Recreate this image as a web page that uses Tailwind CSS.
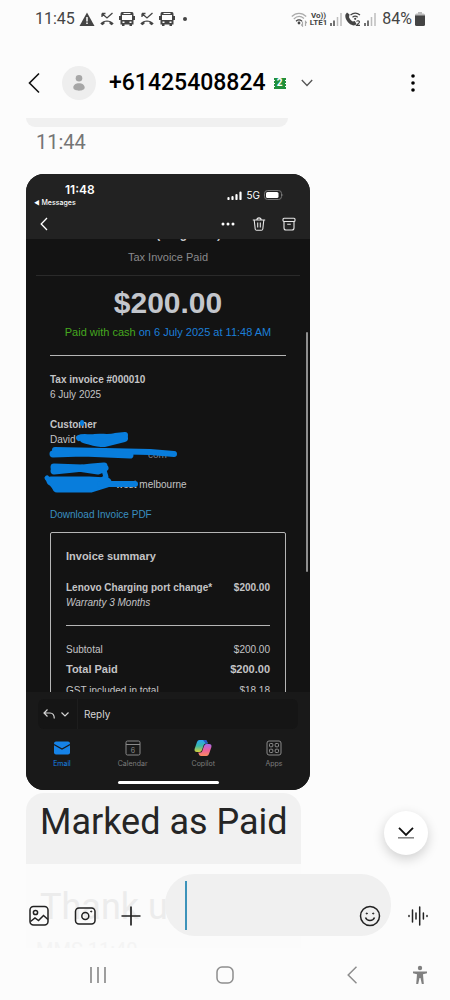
<!DOCTYPE html>
<html lang="en">
<head>
  <meta charset="UTF-8" />
  <meta name="viewport" content="width=device-width, initial-scale=1.0" />
  <title>Messages</title>
  <script src="https://cdn.jsdelivr.net/npm/@tailwindcss/browser@4"></script>
</head>
<body class="bg-[#fcfcfc] font-['Roboto',sans-serif] text-black">
  <svg class="hidden">
    <symbol id="missed" viewBox="0 0 16 16">
      <path d="M3 2.500v3.500M3 2.500h3.500M3.200 2.800l4.800 4.200 5.500-5" fill="none" stroke="#444" stroke-width="1.300" />
      <path d="M1.300 12.600c3.500-4 9.900-4 13.400 0l-2 1.600-2.200-1.500v-1.600c-1.600-.6-3.400-.6-5 0v1.600l-2.200 1.500z" fill="#444" />
    </symbol>
    <symbol id="bus" viewBox="0 0 16 16">
      <path fill-rule="evenodd" fill="#444" d="M3 1h10q1.500 0 1.500 2v2H16v4h-1.500v4.500H13V15h-2.500v-1.500h-5V15H3v-1.500H1.500V9H0V5h1.500V3Q1.500 1 3 1zM3 4v5h10V4zM3.500 10.500v1.500h2v-1.500zM10.500 10.500v1.500h2v-1.500zM4.500 2v1h7V2z" />
    </symbol>
    <symbol id="signal" viewBox="0 0 12 14">
      <path d="M1 14v-3M4 14V8.500" stroke="#444" stroke-width="1.500" />
      <path d="M7.500 14V5M11 14V1" stroke="#bdbdbd" stroke-width="1.500" />
    </symbol>
  </svg>

  <div class="min-h-screen flex flex-col">
    <!-- Status bar -->
    <div class="flex items-center justify-between h-[38px] pl-[35px] pr-[25px] text-base text-[#444]">
      <div class="flex items-center gap-1">
        <span class="w-10">11:45</span>
        <svg class="w-4 h-4" viewBox="0 0 16 16"><path d="M8 1.500 15.500 15H.5z" fill="#444" /><path d="M8 6v4.500M8 11.500V13" stroke="#fff" stroke-width="1.500" /></svg>
        <svg class="w-4 h-4"><use href="#missed" /></svg>
        <svg class="w-4 h-4"><use href="#bus" /></svg>
        <svg class="w-4 h-4"><use href="#missed" /></svg>
        <svg class="w-4 h-4"><use href="#bus" /></svg>
        <span class="w-1 h-1 ml-1 rounded-full bg-[#444]"></span>
      </div>
      <div class="flex items-center gap-[3px]">
        <svg class="w-4 h-4" viewBox="0 0 16 16" fill="none" stroke-width="1.200">
          <path d="M.8 5.500C5 1.200 11 1.200 15.200 5.500M2.800 8C6 4.800 10 4.800 13 7.500" stroke="#aaa" />
          <path d="M5 10.200c2-1.700 4-1.700 6 0" stroke="#444" />
          <circle cx="8" cy="12" r="1.400" fill="#444" />
          <path d="M11.500 10.500v4.500l-1.300-1.500M14.500 15v-4.500l1.300 1.500" stroke="#aaa" />
        </svg>
        <span class="flex flex-col items-center text-[8px] leading-[7px] font-bold"><span>Vo))</span><span>LTE1</span></span>
        <svg class="w-3 h-[14px]"><use href="#signal" /></svg>
        <svg class="w-4 h-4" viewBox="0 0 16 16">
          <path d="M2 1.500 4.500 3.500 4 6.200c.8 2 2 3.300 3.800 4.200l2-.5L11.500 13c-1 1.500-3 1.800-5 .8C2.500 12-.5 7 .5 3.500z" fill="#444" />
          <path d="M5.500 4c3-2.500 6.500-2.500 9.500 0M7.500 6.200c1.700-1.300 3.500-1.300 5.200 0" fill="none" stroke="#444" stroke-width="1.200" />
          <circle cx="10.200" cy="7.800" r="1.100" fill="#444" />
          <path d="M11.500 10.500c1-1.300 3.200-.8 3 .7-.2 1-2 1.800-2.900 3.100H15" fill="none" stroke="#444" stroke-width="1.200" />
        </svg>
        <svg class="w-3 h-[14px]"><use href="#signal" /></svg>
        <span class="ml-[3px]">84%</span>
        <svg class="w-[10px] h-[14px]" viewBox="0 0 10 14"><path d="M3 0h4v1.500h1.500Q10 1.500 10 3v1H0V3q0-1.500 1.500-1.500H3z" fill="#bbb" /><path d="M0 3.500h10v9q0 1.500-1.500 1.500h-7Q0 14 0 12.500z" fill="#444" /></svg>
      </div>
    </div>

    <!-- Conversation header -->
    <header class="flex items-center h-[70px] mt-[10px] pl-7 pr-[29px]">
      <button aria-label="Back"><svg class="w-3 h-[22px]" viewBox="0 0 12 22" fill="none" stroke="#111" stroke-width="1.600"><path d="M11 1.500 1.500 11 11 20.500" /></svg></button>
      <span class="flex items-center justify-center w-[34px] h-[34px] ml-[22px] rounded-full bg-[#eeeeee]">
        <svg class="w-3 h-4" viewBox="0 0 12 16" fill="#a6a6a6"><circle cx="6" cy="3.300" r="3.300" /><path d="M.3 12.500C.3 6.700 11.700 6.700 11.700 12.500c0 4.200-11.400 4.200-11.400 0z" /></svg>
      </span>
      <h1 class="ml-[13px] text-[23px] font-medium">+61425408824</h1>
      <span class="relative flex items-center justify-center w-3 h-[11px] ml-2 text-[10px] leading-none font-bold text-white">
        <svg class="absolute top-0 left-0 w-3 h-[11px]" viewBox="0 0 12 11"><path d="M1 0h10v11H1z" fill="#21903c" /><path d="M.5 0v11M11.500 0v11" stroke="#21903c" stroke-dasharray="2 1" /></svg>
        <span class="relative">2</span>
      </span>
      <button aria-label="Details" class="ml-[15px]"><svg class="w-3 h-[8px]" viewBox="0 0 12 8" fill="none" stroke="#555" stroke-width="1.300"><path d="M.8 1 6 6.500 11.200 1" /></svg></button>
      <button aria-label="More options" class="ml-auto"><svg class="w-4 h-5" viewBox="0 0 16 20"><circle cx="8" cy="3" r="1.800" /><circle cx="8" cy="10" r="1.800" /><circle cx="8" cy="17" r="1.800" /></svg></button>
    </header>

    <!-- Messages -->
    <main class="relative flex-1 pl-[26px]">
      <div class="h-[9px] mr-[162px] rounded-b-[18px] bg-[#f0f0f0]"></div>
      <p class="h-[47px] pl-[10px] pt-[3px] text-[20px] leading-6 text-[#757575]">11:44</p>

      <section class="relative mr-[140px] rounded-[18px] overflow-hidden bg-[#131313] font-['Liberation_Sans',sans-serif] text-[10px] leading-[15px] text-[#c4c4c6]">
        <div class="h-[65px] pt-[9px] bg-[#222222] text-white font-['Inter',sans-serif]">
          <div class="flex justify-between pl-2 pr-[26px]">
            <div>
              <p class="pl-[31px] text-xs leading-[14px] font-semibold">11:48</p>
              <p class="mt-px text-[7px] leading-[9px] font-medium"><span class="text-[6px]">◀</span> Messages</p>
            </div>
            <div class="flex items-center gap-1 h-6 text-[10px]">
              <svg class="w-[15px] h-[9px]" viewBox="0 0 15 9" stroke="#fff" stroke-width="2.200" stroke-linecap="round"><path d="M1.500 8V7M5.500 8V6M9.500 8V4M13.500 8V1.500" /></svg>
              <span>5G</span>
              <svg class="w-5 h-[10px]" viewBox="0 0 20 10"><rect x=".5" y=".5" width="17" height="9" rx="3" fill="none" stroke="#777" /><rect x="2" y="2" width="12.500" height="6" rx="1.500" fill="#fff" /><path d="M18.500 3.500q1.500 1.500 0 3z" fill="#777" /></svg>
            </div>
          </div>
          <div class="flex items-center h-[30px] mt-[2px] px-[14px]">
            <svg class="w-2 h-[14px]" viewBox="0 0 8 14" fill="none" stroke="#fff" stroke-width="1.300"><path d="M7 1 1.200 7 7 13" /></svg>
            <svg class="w-[14px] h-1 ml-auto" viewBox="0 0 14 4" fill="#fff"><circle cx="2" cy="2" r="1.500" /><circle cx="7" cy="2" r="1.500" /><circle cx="12" cy="2" r="1.500" /></svg>
            <svg class="w-[14px] h-[14px] ml-[17px]" viewBox="0 0 14 14" fill="none" stroke="#e8e8e8" stroke-width="1.100"><path d="M.8 3h12.400M4.800 3C5 .2 9 .2 9.200 3M2.200 3l1 9q.2 1.300 1.400 1.300h4.800q1.200 0 1.400-1.300l1-9M5.700 5.500v5M8.300 5.500v5" /></svg>
            <svg class="w-[14px] h-[14px] ml-4" viewBox="0 0 14 14" fill="none" stroke="#e8e8e8" stroke-width="1.100"><rect x="1" y="1.200" width="12" height="3.300" rx="1" /><path d="M2 4.500V11q0 2 2 2h6q2 0 2-2V4.500M5.200 7.300h3.600" /></svg>
          </div>
        </div>

        <div class="h-[453px] overflow-hidden">
          <p class="-mt-[13px] text-center text-xs leading-4 font-bold">Mobile (Kingsford)</p>
          <p class="mt-[7px] text-center text-[11px] leading-4 text-[#8a8a8c]">Tax Invoice Paid</p>
          <hr class="mt-[10px] mx-[10px] border-[#2a2a2a]" />
          <p class="mt-[11px] text-center text-[30px] leading-8 font-bold text-[#c3c6cc]">$200.00</p>
          <p class="mt-[5px] text-center text-[11px] leading-4 text-[#1c7fd8]"><span class="text-[#45a81f]">Paid with cash</span> on 6 July 2025 at 11:48 AM</p>
          <div class="mx-6">
            <hr class="mt-[15px] border-[#b5b5b5]" />
            <p class="mt-4 font-bold">Tax invoice #000010</p>
            <p>6 July 2025</p>
            <div class="relative mt-[15px]">
              <p class="font-bold">Customer</p>
              <p>David</p>
              <p class="pl-[98px] text-[#7c8288]">com</p>
              <p class="h-[15px]"></p>
              <p class="pl-[66px]">west melbourne</p>
              <!-- Marker strokes over the private details -->
              <svg class="absolute -left-2 top-0 w-[140px] h-20" viewBox="42 417 140 80" fill="none" stroke="#087ddc" stroke-linecap="round" stroke-linejoin="round">
                <path d="M82 422v2" stroke-width="4" />
                <path d="M79 438c4-2 10 0 16-1s14 1 20-1l10-1" stroke-width="6" />
                <path d="M84 439c8 2 12 4 20 4l20-5" stroke-width="8" />
                <path d="M55 450l50 1 45 1 24 2" stroke-width="6" />
                <path d="M53 454l30-1 47 2" stroke-width="7" />
                <path d="M54 467l28 1M54 471l20-2 18-2 12-1M78 468l20 3 7-3" stroke-width="7" />
                <path d="M103 467l3 10-4 3" stroke-width="5" />
                <path d="M47 478l8 10" stroke-width="5" />
                <path d="M51 481h38l18 1M57 488h34l16-5" stroke-width="9" />
                <path d="M100 484h35" stroke-width="6" />
              </svg>
            </div>
            <a href="#" class="block mt-[15px] text-[#3a8fc0]">Download Invoice PDF</a>
            <div class="mt-[10px] h-44 border border-[#b5b5b5] rounded-[2px] px-[15px] pt-[15px]">
              <h2 class="text-[11px] leading-4 font-bold">Invoice summary</h2>
              <table class="w-full mt-4">
                <tr class="font-bold"><td>Lenovo Charging port change*</td><td class="text-right">$200.00</td></tr>
                <tr class="italic"><td class="pb-[15px]">Warranty 3 Months</td><td></td></tr>
                <tr class="border-t border-[#b5b5b5]"><td class="pt-4">Subtotal</td><td class="pt-4 text-right">$200.00</td></tr>
                <tr class="text-[11px] leading-4 font-bold"><td class="pt-1">Total Paid</td><td class="pt-1 text-right">$200.00</td></tr>
                <tr><td class="pt-[6px]">GST included in total</td><td class="pt-[6px] text-right">$18.18</td></tr>
              </table>
            </div>
          </div>
        </div>
        <div class="absolute right-[2px] top-[158px] w-[2px] h-60 rounded-full bg-[#8e8e8e]"></div>

        <div class="pt-[7px] pb-[6px] bg-[#191919] font-['Inter',sans-serif]">
          <div class="flex items-center h-[30px] mx-3 pl-[5px] rounded-md bg-[#151515] text-[#d5d5d5]">
            <svg class="w-3 h-3" viewBox="0 0 12 12" fill="none" stroke="#d5d5d5" stroke-width="1.200"><path d="M4.500 1.500 1 5l3.500 3.500M1 5h6q4.200 0 4.300 5.500" /></svg>
            <svg class="w-2 h-[5px] ml-[6px]" viewBox="0 0 8 5" fill="none" stroke="#d5d5d5" stroke-width="1.200"><path d="M.5.5 4 4 7.500.5" /></svg>
            <span class="w-px h-full ml-2 bg-[#1d1d1d]"></span>
            <span class="ml-[6px]">Reply</span>
          </div>
          <div class="flex justify-between px-[21px] mt-[11px] text-[7px] leading-[9px] text-[#7d7d7d]">
            <div class="flex flex-col items-center w-[30px] gap-[3px] text-[#1683e8]">
              <svg class="w-4 h-4" viewBox="0 0 16 16"><rect y="1.500" width="16" height="13" rx="2" fill="#1683e8" /><path d="M0 4.500 8 9l8-4.500" fill="none" stroke="#191919" stroke-width="1.100" /></svg>
              Email
            </div>
            <div class="flex flex-col items-center w-[30px] gap-[3px]">
              <svg class="w-4 h-4" viewBox="0 0 16 16" fill="none" stroke="#8a8a8a"><rect x="1" y="1" width="14" height="14" rx="1.500" /><path d="M1 4.500h14" /><text x="8" y="13" text-anchor="middle" font-size="7" stroke="none" fill="#8a8a8a">6</text></svg>
              Calendar
            </div>
            <div class="flex flex-col items-center w-[30px] gap-[3px]">
              <svg class="w-[18px] h-4" viewBox="0 0 18 16">
                <defs>
                  <linearGradient id="cool" x2="0" y2="1"><stop stop-color="#2aa5f5" /><stop offset=".5" stop-color="#3cb8a8" /><stop offset="1" stop-color="#d6d23a" /></linearGradient>
                  <linearGradient id="warm" x2="0" y2="1"><stop stop-color="#a56be8" /><stop offset=".5" stop-color="#ec5f9c" /><stop offset="1" stop-color="#fb8b60" /></linearGradient>
                </defs>
                <path d="M5.500 0h5.500q1.800 0 2.300 2l.4 1.500h-2q-1.500 0-2 1.600L8 10q-.6 2-2.500 2H3Q0 12 .6 9L3 2Q3.700 0 5.500 0z" fill="url(#cool)" />
                <path d="M12.500 16H7q-1.800 0-2.300-2l-.4-1.500h2q1.500 0 2-1.600L10 6q.6-2 2.500-2H15q3 0 2.400 3L15 14q-.7 2-2.500 2z" fill="url(#warm)" />
                <path d="M9 0h2q1.800 0 2.300 2l.4 1.500h-2z" fill="#2858c8" />
              </svg>
              Copilot
            </div>
            <div class="flex flex-col items-center w-[30px] gap-[3px]">
              <svg class="w-4 h-4" viewBox="0 0 16 16" fill="none" stroke="#8a8a8a"><rect x="1" y="1" width="14" height="14" rx="2" /><rect x="3.500" y="3.500" width="3.300" height="3.300" rx=".8" /><rect x="9.200" y="3.500" width="3.300" height="3.300" rx=".8" /><rect x="3.500" y="9.200" width="3.300" height="3.300" rx=".8" /><rect x="9.200" y="9.200" width="3.300" height="3.300" rx=".8" /></svg>
              Apps
            </div>
          </div>
          <div class="w-[101px] h-[3px] mx-auto mt-[13px] rounded-full bg-white"></div>
        </div>
      </section>

      <div class="mt-[3px] mr-[149px] h-[71px] pl-[14px] pt-[7px] rounded-t-[18px] bg-[#f1f1f1] text-[36px] leading-[44px] whitespace-nowrap text-[#252525]">Marked as Paid</div>

      <button aria-label="Scroll to latest" class="absolute right-[22px] bottom-[9px] flex items-center justify-center w-11 h-11 rounded-full bg-white shadow-[0_4px_12px_rgba(0,0,0,0.18)]">
        <svg class="w-4 h-3" viewBox="0 0 16 12" fill="none"><path d="M1 .8 8 8l7-7.200" stroke="#111" stroke-width="1.800" /><path d="M0 10.800h16" stroke="#888" stroke-width="1.600" /></svg>
      </button>
    </main>

    <!-- Composer, with the next message fading out behind it -->
    <div class="relative h-[86px] overflow-hidden">
      <div class="absolute left-[26px] right-[149px] top-0 h-[84px] overflow-hidden bg-[#fbfbfb]">
        <p class="pl-[14px] pt-[21px] text-[36px] leading-[44px] text-[#ececec]">Thank u</p>
        <p class="pl-[10px] pt-[9px] text-[20px] leading-6 text-[#f4f4f4]">MMS 11:40</p>
      </div>
      <form class="relative flex items-center h-[62px] mt-[10px] pl-7 pr-5">
        <div class="flex items-center gap-6 pt-[22px]">
          <button type="button" aria-label="Gallery"><svg class="w-[22px] h-[22px]" viewBox="0 0 22 22" fill="none" stroke="#222" stroke-width="1.500"><rect x="2" y="1.500" width="18" height="18.500" rx="3.500" /><circle cx="7.500" cy="7.500" r="2.100" /><path d="m2.500 16.500 4.500-3.500 3.500 2.500 5-5 4.500 4" /></svg></button>
          <button type="button" aria-label="Camera"><svg class="w-[22px] h-[22px]" viewBox="0 0 22 22" fill="none" stroke="#222" stroke-width="1.500"><rect x="1.500" y="3" width="19.500" height="16" rx="3.500" /><circle cx="11.300" cy="11" r="3.500" /><circle cx="17.200" cy="6.500" r=".6" fill="#222" stroke-width="1" /></svg></button>
          <button type="button" aria-label="Add"><svg class="w-[22px] h-[22px]" viewBox="0 0 22 22" fill="none" stroke="#222" stroke-width="1.700"><path d="M11 1.500v19M1.500 11h19" /></svg></button>
        </div>
        <div class="relative flex flex-1 h-full ml-[23px] mr-[17px] rounded-[30px] bg-[#f0f0f0]">
          <input type="text" aria-label="Message" class="flex-1 w-0 pl-5 text-[36px] outline-none" />
          <span class="absolute left-5 top-[7px] w-[2px] h-[49px] bg-[#3d93ba]"></span>
          <button type="button" aria-label="Emoji" class="self-end mr-[10px] mb-[9px]"><svg class="w-[22px] h-[22px]" viewBox="0 0 22 22" fill="none" stroke="#222" stroke-width="1.500"><circle cx="11" cy="11" r="9.500" /><path d="M6.500 12.500c1.500 4 7.500 4 9 0" /><circle cx="7.800" cy="8.500" r=".6" fill="#222" stroke-width="1" /><circle cx="14.200" cy="8.500" r=".6" fill="#222" stroke-width="1" /></svg></button>
        </div>
        <button type="button" aria-label="Voice message" class="pt-[22px]"><svg class="w-[22px] h-[22px]" viewBox="0 0 22 22" fill="none" stroke="#222" stroke-width="1.500" stroke-linecap="round"><path d="M1 10.500v1M4.500 5v12M8 8v6M11.700 2v18M15.400 8v6M19 10.500v1" /></svg></button>
      </form>
    </div>

    <!-- System navigation -->
    <nav class="flex items-center h-[50px] pl-[89px] pr-5">
      <button aria-label="Recents"><svg class="w-[18px] h-[18px]" viewBox="0 0 18 18" stroke="#8d8d8d" stroke-width="1.700"><path d="M2 1v16M9 1v16M16 1v16" /></svg></button>
      <button aria-label="Home" class="ml-[32%]"><svg class="w-[18px] h-[18px]" viewBox="0 0 18 18" fill="none" stroke="#8d8d8d" stroke-width="1.500"><rect x="1" y="1" width="16" height="16" rx="5" /></svg></button>
      <button aria-label="Back" class="ml-[33%]"><svg class="w-[10px] h-[18px]" viewBox="0 0 10 18" fill="none" stroke="#8d8d8d" stroke-width="1.500"><path d="M9.500.8 1.200 9l8.300 8.200" /></svg></button>
      <button aria-label="Accessibility" class="ml-auto"><svg class="w-5 h-5" viewBox="0 0 20 20" fill="#808080"><circle cx="10" cy="3" r="2.200" /><path d="M3 6.500h14v1.800l-4 .9.800 9.800h-2L10.500 13h-1L8.200 19h-2L7 9.200l-4-.9z" /></svg></button>
    </nav>
  </div>
</body>
</html>
